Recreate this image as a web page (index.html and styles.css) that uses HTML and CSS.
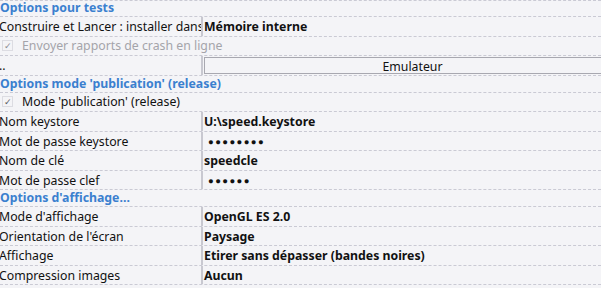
FILE: index.html
```html
<!DOCTYPE html>
<html lang="fr">
<head>
<meta charset="utf-8"/>
<title>Options</title>
<link rel="stylesheet" href="styles.css">
</head>
<body>
<div class="grille">
  <div class="titre premier">Options pour tests</div>
  <div class="ligne">
    <div class="nom">Construire et Lancer : installer dans</div>
    <div class="valeur">Mémoire interne</div>
  </div>
  <div class="ligne complet inactif">
    <span class="case">&#10003;</span> Envoyer rapports de crash en ligne
  </div>
  <div class="ligne">
    <div class="nom">..</div>
    <div class="valeur"><button class="bouton">Emulateur</button></div>
  </div>

  <div class="titre">Options mode 'publication' (release)</div>
  <div class="ligne complet">
    <span class="case">&#10003;</span> Mode 'publication' (release)
  </div>
  <div class="ligne">
    <div class="nom">Nom keystore</div>
    <div class="valeur">U:\speed.keystore</div>
  </div>
  <div class="ligne">
    <div class="nom">Mot de passe keystore</div>
    <div class="valeur"><span class="points">●●●●●●●●</span></div>
  </div>
  <div class="ligne">
    <div class="nom">Nom de clé</div>
    <div class="valeur">speedcle</div>
  </div>
  <div class="ligne">
    <div class="nom">Mot de passe clef</div>
    <div class="valeur"><span class="points">●●●●●●</span></div>
  </div>

  <div class="titre">Options d'affichage...</div>
  <div class="ligne">
    <div class="nom">Mode d'affichage</div>
    <div class="valeur">OpenGL ES 2.0</div>
  </div>
  <div class="ligne">
    <div class="nom">Orientation de l'écran</div>
    <div class="valeur">Paysage</div>
  </div>
  <div class="ligne">
    <div class="nom">Affichage</div>
    <div class="valeur">Etirer sans dépasser (bandes noires)</div>
  </div>
  <div class="ligne">
    <div class="nom">Compression images</div>
    <div class="valeur">Aucun</div>
  </div>
</div>
</body>
</html>
```

FILE: styles.css
```css
body {
  margin: 0;
  background: #f4f4f7;
  font-family: "Noto Sans", "Open Sans", sans-serif;
  font-size: 12.3px;
  color: #111;
  overflow: hidden;
}
.grille {
  border-top: 1px dashed #cacad4;
}
.titre {
  height: 16px;
  line-height: 15px;
  border-bottom: 1px dashed #cacad4;
  color: #3b80cf;
  font-weight: bold;
}
.titre.premier {
  height: 15px;
  line-height: 14px;
}
.ligne {
  height: 18.5px;
  border-bottom: 1px dashed #cacad4;
  display: flex;
  align-items: stretch;
}
.nom {
  width: 201px;
  flex: none;
  border-right: 2px solid #c8c8d0;
  white-space: nowrap;
  overflow: hidden;
  line-height: 20px;
  text-indent: -1px;
}
.valeur {
  flex: 1;
  padding-left: 1px;
  font-weight: bold;
  line-height: 20px;
  white-space: nowrap;
  min-width: 0;
}
.complet {
  align-items: center;
  padding-left: 2px;
  gap: 9px;
}
.inactif {
  color: #a4a4aa;
}
.case {
  width: 9px;
  height: 9px;
  border: 1px solid #dcdce2;
  color: #5a5a62;
  font-size: 9px;
  line-height: 9px;
  text-align: center;
}
.inactif .case {
  color: #8a8a92;
}
.bouton {
  width: calc(100% + 20px);
  height: 17px;
  margin: 1px 0 0 0;
  padding: 0;
  border: 1px solid #a8a8b0;
  background: #f4f4f7;
  font-family: inherit;
  font-size: 12.3px;
  color: #111;
}
.points {
  padding-left: 4px;
  font-size: 9.5px;
  letter-spacing: 1.4px;
  vertical-align: 1px;
}
```
